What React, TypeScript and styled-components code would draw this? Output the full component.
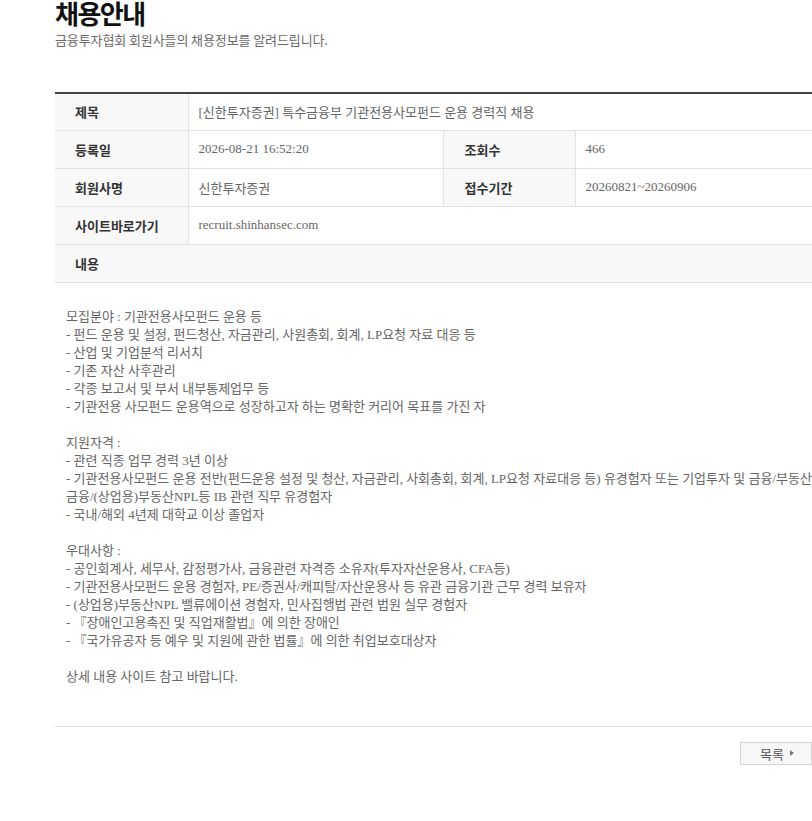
import styled, { createGlobalStyle } from "styled-components";

const GlobalStyle = createGlobalStyle`
  html, body {
    margin: 0;
    padding: 0;
    background: #fff;
    overflow: hidden;
  }
  body {
    font-family: "Noto Sans CJK KR", "Noto Sans", sans-serif;
  }
`;

const serifMix = `"Liberation Serif", "Noto Sans CJK KR", serif`;

const info = [
  { label: "등록일", value: "2026-08-21 16:52:20", label2: "조회수", value2: "466" },
  { label: "회원사명", value: "신한투자증권", label2: "접수기간", value2: "20260821~20260906" },
];

const content = [
  "모집분야 : 기관전용사모펀드 운용 등",
  "- 펀드 운용 및 설정, 펀드청산, 자금관리, 사원총회, 회계, LP요청 자료 대응 등",
  "- 산업 및 기업분석 리서치",
  "- 기존 자산 사후관리",
  "- 각종 보고서 및 부서 내부통제업무 등",
  "- 기관전용 사모펀드 운용역으로 성장하고자 하는 명확한 커리어 목표를 가진 자",
  "",
  "지원자격 :",
  "- 관련 직종 업무 경력 3년 이상",
  "- 기관전용사모펀드 운용 전반(펀드운용 설정 및 청산, 자금관리, 사회총회, 회계, LP요청 자료대응 등) 유경험자 또는 기업투자 및 금융/부동산",
  "금융/(상업용)부동산NPL등 IB 관련 직무 유경험자",
  "- 국내/해외 4년제 대학교 이상 졸업자",
  "",
  "우대사항 :",
  "- 공인회계사, 세무사, 감정평가사, 금융관련 자격증 소유자(투자자산운용사, CFA등)",
  "- 기관전용사모펀드 운용 경험자, PE/증권사/캐피탈/자산운용사 등 유관 금융기관 근무 경력 보유자",
  "- (상업용)부동산NPL 밸류에이션 경험자, 민사집행법 관련 법원 실무 경험자",
  "- 『장애인고용촉진 및 직업재활법』에 의한 장애인",
  "- 『국가유공자 등 예우 및 지원에 관한 법률』에 의한 취업보호대상자",
  "",
  "상세 내용 사이트 참고 바랍니다.",
];

const App = () => {
  return (
    <>
      <GlobalStyle />
      <Page>
        <Title>채용안내</Title>
        <SubTitle>금융투자협회 회원사들의 채용정보를 알려드립니다.</SubTitle>

        <Table>
          <colgroup>
            <col style={{ width: 133 }} />
            <col style={{ width: 255 }} />
            <col style={{ width: 132 }} />
            <col />
          </colgroup>
          <tbody>
            <tr>
              <Th $h={37}>제목</Th>
              <Td $h={37} colSpan={3}>
                [신한투자증권] 특수금융부 기관전용사모펀드 운용 경력직 채용
              </Td>
            </tr>
            {info.map((row) => (
              <tr key={row.label}>
                <Th>{row.label}</Th>
                <Td>{row.value}</Td>
                <Th $second>{row.label2}</Th>
                <Td>{row.value2}</Td>
              </tr>
            ))}
            <tr>
              <Th>사이트바로가기</Th>
              <Td colSpan={3}>recruit.shinhansec.com</Td>
            </tr>
            <tr>
              <Th $wide colSpan={4}>
                내용
              </Th>
            </tr>
          </tbody>
        </Table>

        <Content>
          {content.map((line, i) => (
            <Line key={i}>{line || "\u00a0"}</Line>
          ))}
        </Content>

        <Bottom>
          <ListButton type="button">목록</ListButton>
        </Bottom>
      </Page>
    </>
  );
};

const Page = styled.div`
  width: 757px;
  margin-left: 55px;
  padding-bottom: 40px;
`;

const Title = styled.h1`
  margin: 0;
  font-size: 26px;
  line-height: 26px;
  font-weight: 700;
  color: #111;
  letter-spacing: -1.5px;
`;

const SubTitle = styled.p`
  margin: 5px 0 0;
  font-size: 13px;
  line-height: 18px;
  color: #6a6a6a;
  letter-spacing: -0.1px;
`;

const Table = styled.table`
  width: 100%;
  margin-top: 43px;
  border-collapse: collapse;
  border-top: 2px solid #444;
  table-layout: fixed;
`;

const Th = styled.th<{ $second?: boolean; $wide?: boolean; $h?: number }>`
  height: ${(p) => p.$h ?? 38}px;
  padding: 0 0 0 ${(p) => (p.$second ? 21 : 20)}px;
  box-sizing: border-box;
  background: #f8f8f8;
  border-bottom: 1px solid #e2e2e2;
  border-right: ${(p) => (p.$wide ? "none" : "1px solid #e2e2e2")};
  border-left: ${(p) => (p.$second ? "1px solid #e2e2e2" : "none")};
  text-align: left;
  font-size: 13px;
  font-weight: 700;
  color: #333;
`;

const Td = styled.td<{ $h?: number }>`
  height: ${(p) => p.$h ?? 38}px;
  padding: 0 0 0 10px;
  box-sizing: border-box;
  border-bottom: 1px solid #e2e2e2;
  font-family: ${serifMix};
  font-size: 13px;
  color: #666;
  white-space: nowrap;
`;

const Content = styled.div`
  padding: 25px 11px 40px;
  border-bottom: 1px solid #e2e2e2;
  font-family: ${serifMix};
  font-size: 13px;
  line-height: 18px;
  color: #666;
`;

const Line = styled.div`
  white-space: nowrap;
`;

const Bottom = styled.div`
  display: flex;
  justify-content: flex-end;
  padding-top: 15px;
`;

const ListButton = styled.button`
  display: flex;
  align-items: center;
  justify-content: center;
  gap: 6px;
  width: 72px;
  height: 23px;
  padding: 0 0 0 2px;
  border: 1px solid #d4d4d4;
  background: #f7f7f7;
  font-family: "Noto Sans CJK KR", sans-serif;
  font-size: 13px;
  color: #555;
  cursor: pointer;

  &::after {
    content: "";
    width: 0;
    height: 0;
    border-top: 3px solid transparent;
    border-bottom: 3px solid transparent;
    border-left: 4px solid #777;
  }
`;

export default App;
